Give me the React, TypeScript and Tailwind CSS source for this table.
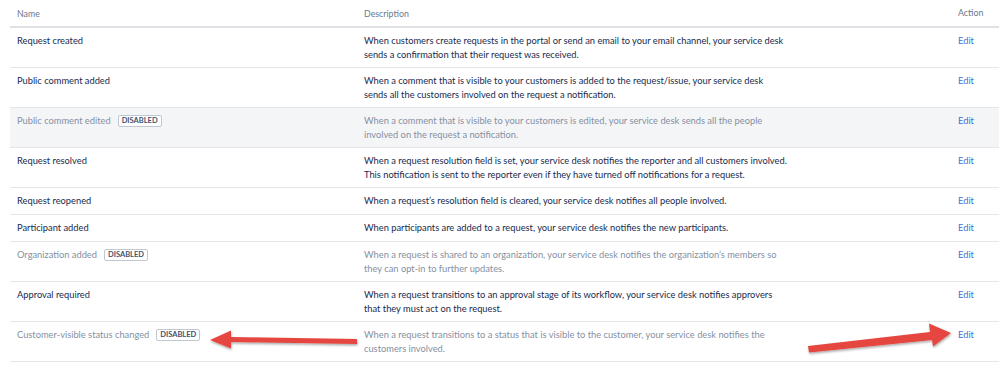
import React from "react";

type Row = { name: string; disabled?: boolean; hover?: boolean; desc: string[] };

const rows: Row[] = [
  { name: "Request created", desc: ["When customers create requests in the portal or send an email to your email channel, your service desk", "sends a confirmation that their request was received."] },
  { name: "Public comment added", desc: ["When a comment that is visible to your customers is added to the request/issue, your service desk", "sends all the customers involved on the request a notification."] },
  { name: "Public comment edited", disabled: true, hover: true, desc: ["When a comment that is visible to your customers is edited, your service desk sends all the people", "involved on the request a notification."] },
  { name: "Request resolved", desc: ["When a request resolution field is set, your service desk notifies the reporter and all customers involved.", "This notification is sent to the reporter even if they have turned off notifications for a request."] },
  { name: "Request reopened", desc: ["When a request\u2019s resolution field is cleared, your service desk notifies all people involved."] },
  { name: "Participant added", desc: ["When participants are added to a request, your service desk notifies the new participants."] },
  { name: "Organization added", disabled: true, desc: ["When a request is shared to an organization, your service desk notifies the organization\u2019s members so", "they can opt-in to further updates."] },
  { name: "Approval required", desc: ["When a request transitions to an approval stage of its workflow, your service desk notifies approvers", "that they must act on the request."] },
  { name: "Customer-visible status changed", disabled: true, desc: ["When a request transitions to a status that is visible to the customer, your service desk notifies the", "customers involved."] },
];

export default function App() {
  return (
    <div className="relative w-[999px] h-[382px] bg-white overflow-hidden" style={{ fontFamily: 'Lato, "Open Sans", sans-serif' }}>
      <div className="ml-[10px] w-[989px]">
        <div className="grid grid-cols-[347px_594px_48px] h-[28px] border-b-2 border-[#dfe1e6] text-[8.8px] text-[#6b778c]">
          <div className="pl-[7px] pt-[7px]">Name</div>
          <div className="pl-[7px] pt-[7px]">Description</div>
          <div className="pl-[7px] pt-[6px]">Action</div>
        </div>
        {rows.map((r) => (
          <div key={r.name} className={`grid grid-cols-[347px_594px_48px] border-b border-[#e4e6ea] text-[9.3px] leading-[14px] ${r.hover ? "bg-[#f4f5f7]" : "bg-white"}`}>
            <div className={`pl-[7px] pt-[6px] ${r.desc.length > 1 ? "pb-[5px]" : "pb-[6px]"} flex items-start gap-[7px] ${r.disabled ? "text-[#8590a2]" : "text-[#172b4d]"}`}>
              <span className="whitespace-nowrap">{r.name}</span>
              {r.disabled && (
                <span className="mt-[1px] h-[12px] px-[3px] border border-[#c1c7d0] rounded-[2px] bg-white text-[7.5px] leading-[10px] font-bold text-[#42526e]">DISABLED</span>
              )}
            </div>
            <div className={`pl-[7px] pt-[6px] ${r.desc.length > 1 ? "pb-[5px]" : "pb-[6px]"} ${r.disabled ? "text-[#8590a2]" : "text-[#172b4d]"}`}>
              {r.desc.map((l) => (
                <div key={l} className="whitespace-nowrap">{l}</div>
              ))}
            </div>
            <div className="pl-[7px] pt-[6px] text-[#3d72db]">Edit</div>
          </div>
        ))}
      </div>
      <svg className="absolute left-0 top-0" width="999" height="382" viewBox="0 0 999 382">
        <defs>
          <filter id="sh" x="-10%" y="-50%" width="120%" height="200%">
            <feDropShadow dx="0.5" dy="1.5" stdDeviation="1" floodColor="#000" floodOpacity="0.35" />
          </filter>
        </defs>
        <g filter="url(#sh)" fill="#e5463f">
          <path d="M357 344 L231 342 L231 348.5 L210 340 L231 330.5 L231 337 L357 339 Z" />
          <path d="M809 352.5 L932 340 L933 346.5 L951 333 L929 323.5 L930 332 L808 346 Z" />
        </g>
      </svg>
    </div>
  );
}
